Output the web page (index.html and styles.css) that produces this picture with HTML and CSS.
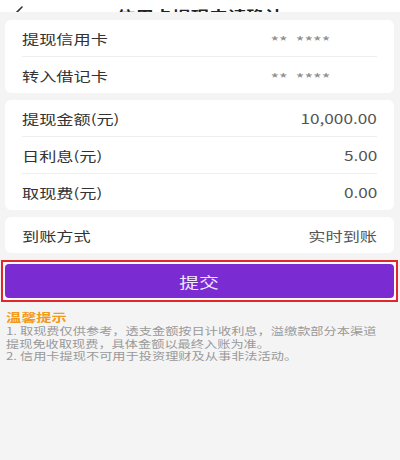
FILE: index.html
```
<!DOCTYPE html>
<html lang="zh-CN">
<head>
<meta charset="utf-8">
<title>信用卡提现申请确认</title>
<link rel="stylesheet" href="styles.css">
</head>
<body>
<header class="topbar">
  <svg class="back" width="24" height="24" viewBox="0 0 24 24"><path d="M16 29 L5 18 L16 7" fill="none" stroke="#333" stroke-width="1.6" stroke-linecap="round" stroke-linejoin="round"/></svg>
  <div class="title"><span class="sx sx-c">信用卡提现申请确认</span></div>
  <svg class="more" width="34" height="8" viewBox="0 0 34 8"><circle cx="6" cy="6" r="2" fill="#777"/><circle cx="18" cy="6" r="2" fill="#777"/><circle cx="30" cy="6" r="2" fill="#777"/></svg>
</header>

<main class="cards">
  <section class="card">
    <div class="row"><span class="label sx">提现信用卡</span><span class="masked sx sx-r">** ****</span></div>
    <div class="row"><span class="label sx">转入借记卡</span><span class="masked sx sx-r">** ****</span></div>
  </section>
  <section class="card">
    <div class="row"><span class="label sx">提现金额(元)</span><span class="value sx sx-r">10,000.00</span></div>
    <div class="row"><span class="label sx">日利息(元)</span><span class="value sx sx-r">5.00</span></div>
    <div class="row"><span class="label sx">取现费(元)</span><span class="value sx sx-r">0.00</span></div>
  </section>
  <section class="card">
    <div class="row"><span class="label sx">到账方式</span><span class="value sx sx-r">实时到账</span></div>
  </section>
</main>

<div class="submit-wrap">
  <button class="submit"><span class="sx sx-c">提交</span></button>
</div>

<section class="tips">
  <div class="tips-title"><span class="sx">温馨提示</span></div>
  <div class="tips-line"><span class="sx">1. 取现费仅供参考，透支金额按日计收利息，溢缴款部分本渠道</span></div>
  <div class="tips-line"><span class="sx">提现免收取现费，具体金额以最终入账为准。</span></div>
  <div class="tips-line"><span class="sx">2. 信用卡提现不可用于投资理财及从事非法活动。</span></div>
</section>
</body>
</html>
```

FILE: styles.css
```
html, body {
  margin: 0;
  padding: 0;
}
body {
  width: 400px;
  height: 460px;
  overflow: hidden;
  background: #f4f4f4;
  font-family: "Noto Sans CJK SC", "Noto Sans", sans-serif;
}

.sx {
  display: inline-block;
  white-space: nowrap;
  transform: scaleX(1.32);
  transform-origin: left center;
}
.sx-r { transform-origin: right center; }
.sx-c { transform-origin: center center; }

.topbar {
  height: 12px;
  background: #fff;
  overflow: hidden;
  display: grid;
  grid-template-columns: 1fr auto 1fr;
  align-items: end;
}
.back {
  justify-self: start;
  margin-left: 6px;
  margin-bottom: 7px;
}
.title {
  font-size: 14px;
  font-weight: bold;
  color: #222;
  line-height: 20px;
  margin-bottom: 6px;
  white-space: nowrap;
}
.more {
  justify-self: end;
  margin-right: 8px;
  margin-bottom: 10px;
}

.cards {
  padding: 8px 6px 0 5px;
}
.card {
  background: #fff;
  border-radius: 6px;
  margin-bottom: 7px;
}
.row {
  margin: 0 17px;
  height: 36px;
  display: flex;
  justify-content: space-between;
  align-items: center;
  font-size: 13px;
}
.row + .row {
  border-top: 1px solid #eeeeee;
}
.label { color: #333; }
.value { color: #555; }
.masked {
  color: #8a8a8a;
  font-size: 14px;
  line-height: 14px;
  padding-top: 5px;
  margin-right: 47px;
  word-spacing: 3px;
}

.submit-wrap {
  margin: 1px 2px 0 1px;
  border: 2px solid #e3262b;
  padding: 2px;
  background: #fbfbfb;
}
.submit {
  display: block;
  width: 100%;
  height: 34px;
  border: 0;
  border-radius: 4px;
  background: #7a2bd2;
  color: #f1e8ff;
  font-family: "Noto Sans CJK SC", sans-serif;
  font-size: 15px;
  padding: 0;
}

.tips {
  padding: 7px 6px 0 6px;
}
.tips-title {
  color: #f29a1a;
  font-size: 11.5px;
  font-weight: bold;
  line-height: 16px;
}
.tips-line {
  color: #999;
  font-size: 10px;
  line-height: 12.5px;
}
```
